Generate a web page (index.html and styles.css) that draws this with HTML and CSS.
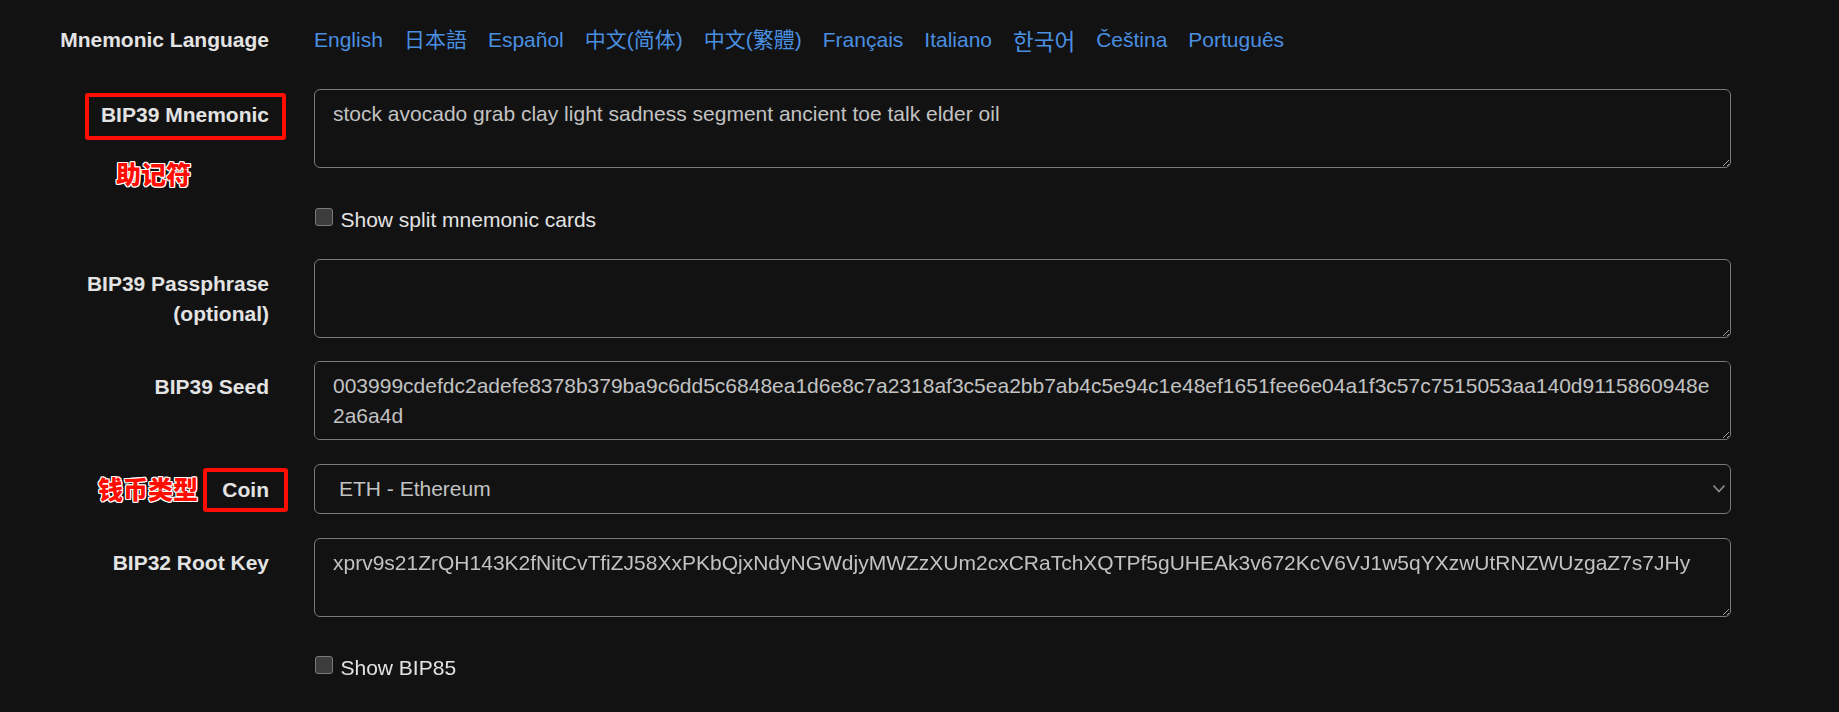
FILE: index.html
```html
<!DOCTYPE html>
<html>
<head>
  <meta charset="utf-8">
  <title>BIP39 Mnemonic Code Converter</title>
  <link rel="stylesheet" href="styles.css">
</head>
<body>

<div class="page">
  <form class="form">

    <div class="row lang-row">
      <label class="label">Mnemonic Language</label>
      <div class="field">
        <p class="languages">
          <a href="#english">English</a>
          <a href="#japanese" class="cjk">日本語</a>
          <a href="#spanish">Español</a>
          <a href="#chinese_simplified" class="cjk">中文(简体)</a>
          <a href="#chinese_traditional" class="cjk tc">中文(繁體)</a>
          <a href="#french">Français</a>
          <a href="#italian">Italiano</a>
          <a href="#korean" class="kr">한국어</a>
          <a href="#czech">Čeština</a>
          <a href="#portuguese">Português</a>
        </p>
      </div>
    </div>

    <div class="row">
      <label class="label">BIP39 Mnemonic</label>
      <div class="field">
        <textarea class="input" rows="2">stock avocado grab clay light sadness segment ancient toe talk elder oil</textarea>
      </div>
    </div>

    <div class="row check-row">
      <div class="field">
        <label class="check"><input type="checkbox"> Show split mnemonic cards</label>
      </div>
    </div>

    <div class="row">
      <label class="label">BIP39 Passphrase<br>(optional)</label>
      <div class="field">
        <textarea class="input" rows="2"></textarea>
      </div>
    </div>

    <div class="row">
      <label class="label">BIP39 Seed</label>
      <div class="field">
        <textarea class="input" rows="2">003999cdefdc2adefe8378b379ba9c6dd5c6848ea1d6e8c7a2318af3c5ea2bb7ab4c5e94c1e48ef1651fee6e04a1f3c57c7515053aa140d9115860948e2a6a4d</textarea>
      </div>
    </div>

    <div class="row">
      <label class="label">Coin</label>
      <div class="field select-wrap">
        <select class="input select">
          <option>ETH - Ethereum</option>
        </select>
        <svg class="chevron" width="14" height="10" viewBox="0 0 14 10"><polyline points="1.5,1.5 7,7.5 12.5,1.5" fill="none" stroke="#8a8a8a" stroke-width="1.8"/></svg>
      </div>
    </div>

    <div class="row">
      <label class="label">BIP32 Root Key</label>
      <div class="field">
        <textarea class="input" rows="2">xprv9s21ZrQH143K2fNitCvTfiZJ58XxPKbQjxNdyNGWdjyMWZzXUm2cxCRaTchXQTPf5gUHEAk3v672KcV6VJ1w5qYXzwUtRNZWUzgaZ7s7JHy</textarea>
      </div>
    </div>

    <div class="row check-row">
      <div class="field">
        <label class="check"><input type="checkbox"> Show BIP85</label>
      </div>
    </div>

  </form>

  <!-- screenshot annotations -->
  <div class="mark-box box-mnemonic"></div>
  <div class="mark-text text-mnemonic">助记符</div>
  <div class="mark-box box-coin"></div>
  <div class="mark-text text-coin">钱币类型</div>
</div>

</body>
</html>
```

FILE: styles.css
```css
body { margin:0; background:#121212; color:#e3e3e3; font-family:"Liberation Sans", Arial, sans-serif; font-size:21px; line-height:30px; }
.page { position:relative; padding-top:14.5px; }
.form { margin:0; }

.row { display:flex; margin-bottom:23.8px; }
.label { flex-shrink:0; width:269px; padding-top:10.5px; text-align:right; font-weight:bold; color:#e3e3e3; }
.field { margin-left:45px; width:1417px; }

.languages { display:flex; gap:21px; margin:0; padding:10.5px 0; }
.languages a { color:#4a8fe0; text-decoration:none; }
.languages .cjk { font-family:"Liberation Sans", "Noto Sans CJK SC", sans-serif; }
.languages .tc { font-family:"Liberation Sans", "Noto Sans CJK TC", sans-serif; }
.languages .kr { font-family:"Noto Sans CJK KR", sans-serif; font-weight:normal; font-size:22.5px; }

.input { display:block; box-sizing:border-box; width:100%; height:79px; margin:0; padding:9px 18px; background:#121212; color:#c2c2c2; border:1px solid #7a7a7a; border-radius:6px; font-family:inherit; font-size:21px; line-height:30px; color-scheme:dark; resize:vertical; outline:none; }
.select-wrap { position:relative; }
.select { height:50px; padding:0 24px; appearance:none; -webkit-appearance:none; }
.chevron { position:absolute; right:5px; top:20px; }

.check-row { padding-top:12.7px; }
.check-row .field { margin-left:314px; }
.check { display:flex; align-items:flex-start; color:#e3e3e3; }
.check input { appearance:none; -webkit-appearance:none; box-sizing:border-box; width:18px; height:18px; margin:3px 7.5px 0 1px; background:#3c3c3c; border:1px solid #7a7a7a; border-radius:3px; }

.mark-box { position:absolute; box-sizing:border-box; border:4px solid #ff0d00; border-radius:3px; }
.box-mnemonic { left:85px; top:93px; width:201px; height:47px; }
.box-coin { left:203px; top:468px; width:85px; height:44px; }
.mark-text { position:absolute; font-family:"Noto Sans CJK SC", sans-serif; font-weight:900; font-size:25px; line-height:25px; color:#ff0d00; text-shadow:1px 0 #fff, -1px 0 #fff, 0 1px #fff, 0 -1px #fff, 1px 1px #fff, -1px -1px #fff, 1px -1px #fff, -1px 1px #fff; }
.text-mnemonic { left:116px; top:161px; }
.text-coin { left:98px; top:476px; }
```
